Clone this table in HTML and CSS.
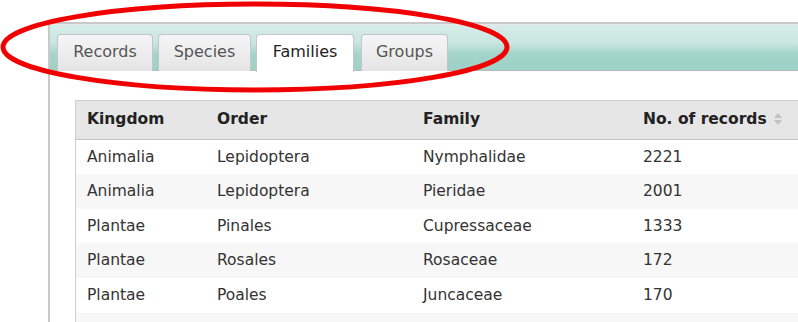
FILE: index.html
```html
<!DOCTYPE html>
<html lang="en">
<head>
    <meta charset="UTF-8">
    <title>Families</title>
    <link rel="stylesheet" href="styles.css">
</head>
<body>
    <div class="page">
        <div class="panel">
            <ul class="tabs">
                <li class="tab">Records</li>
                <li class="tab">Species</li>
                <li class="tab active">Families</li>
                <li class="tab">Groups</li>
            </ul>

            <div class="tab-content">
                <table class="data-table">
                    <thead>
                        <tr>
                            <th class="col-kingdom">Kingdom</th>
                            <th class="col-order">Order</th>
                            <th class="col-family">Family</th>
                            <th class="sortable">No. of records
                                <svg class="sort-icon" width="8" height="12" viewBox="0 0 8 12">
                                    <path d="M4 0 L8 5 L0 5 Z" />
                                    <path d="M0 7 L8 7 L4 12 Z" />
                                </svg>
                            </th>
                        </tr>
                    </thead>
                    <tbody>
                        <tr><td>Animalia</td><td>Lepidoptera</td><td>Nymphalidae</td><td>2221</td></tr>
                        <tr><td>Animalia</td><td>Lepidoptera</td><td>Pieridae</td><td>2001</td></tr>
                        <tr><td>Plantae</td><td>Pinales</td><td>Cupressaceae</td><td>1333</td></tr>
                        <tr><td>Plantae</td><td>Rosales</td><td>Rosaceae</td><td>172</td></tr>
                        <tr><td>Plantae</td><td>Poales</td><td>Juncaceae</td><td>170</td></tr>
                        <tr><td>&nbsp;</td><td></td><td></td><td></td></tr>
                    </tbody>
                </table>
            </div>
        </div>

        <!-- red ring marking the tab strip -->
        <svg class="highlight" width="798" height="322" viewBox="0 0 798 322">
            <ellipse cx="255" cy="47" rx="252" ry="43" fill="none" stroke="#f00000" stroke-width="5" />
        </svg>
    </div>
</body>
</html>
```

FILE: styles.css
```css
html, body {
    margin: 0;
    padding: 0;
    background-color: #fff;
    overflow: hidden;
}

body {
    font-family: "DejaVu Sans", Verdana, sans-serif;
    font-size: 15.5px;
    color: #333;
}

.page {
    position: relative;
    width: 798px;
    height: 322px;
    overflow: hidden;
}

.panel {
    margin: 22px 0 0 48px;
    border-top: 2px solid #c9c9c9;
    border-left: 2px solid #c9c9c9;
    height: 320px;
}

/* tab strip */
.tabs {
    list-style: none;
    margin: 0;
    padding: 9px 0 0 7px;
    display: flex;
    gap: 5px;
    border-top: 1px solid #e8e8e8;
    border-bottom: 1px solid #b9b9b9;
    background: linear-gradient(to bottom, #d6ece8 0%, #c8e6e0 40%, #a2d4ca 65%, #9ed2c7 100%);
    height: 36px;
}

.tab {
    width: 96px;
    box-sizing: border-box;
    text-align: center;
    line-height: 34px;
    height: 37px;
    font-size: 16px;
    color: #555;
    background: linear-gradient(to bottom, #f5f5f5 0%, #ececec 60%, #e4e4e4 100%);
    border: 1px solid #c5c5c5;
    border-bottom: none;
    border-radius: 4px 4px 0 0;
}

.tab:nth-child(2) {
    width: 93px;
}

.tab:nth-child(4) {
    width: 87px;
    margin-left: 2px;
}

.tab.active {
    width: 98px;
    background: #fff;
    color: #222;
    height: 38px;
    position: relative;
    z-index: 1;
}

/* table */
.tab-content {
    padding: 29px 0 0 25px;
}

.data-table {
    border-collapse: collapse;
    width: 760px;
    border-left: 1px solid #cfcfcf;
}

.data-table th,
.data-table td {
    text-align: left;
    padding: 8px 11px;
    line-height: 18.6px;
    white-space: nowrap;
}

.data-table th {
    background-color: #e6e6e6;
    color: #222;
    font-weight: bold;
    padding-top: 9px;
    padding-bottom: 10px;
    border-top: 1px solid #cfcfcf;
    border-bottom: 1px solid #c4c4c4;
}

.col-kingdom { width: 108px; }
.col-order { width: 184px; }
.col-family { width: 198px; }

.data-table tbody tr:nth-child(even) td {
    background-color: #f7f7f7;
}

.sort-icon {
    fill: #c2c2c2;
    margin-left: 2px;
    vertical-align: -1px;
}

.highlight {
    position: absolute;
    left: 0;
    top: 0;
    pointer-events: none;
}
```
